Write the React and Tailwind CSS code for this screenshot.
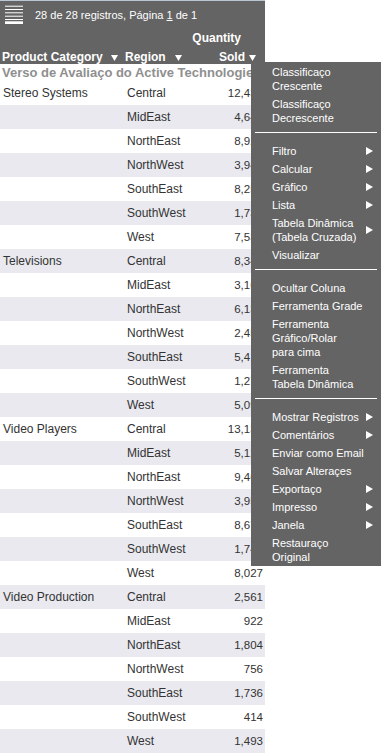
import React from "react";

const data = [
  ["Stereo Systems", [["Central", "12,437"], ["MidEast", "4,649"], ["NorthEast", "8,921"], ["NorthWest", "3,947"], ["SouthEast", "8,257"], ["SouthWest", "1,738"], ["West", "7,534"]]],
  ["Televisions", [["Central", "8,342"], ["MidEast", "3,164"], ["NorthEast", "6,137"], ["NorthWest", "2,456"], ["SouthEast", "5,412"], ["SouthWest", "1,274"], ["West", "5,093"]]],
  ["Video Players", [["Central", "13,135"], ["MidEast", "5,128"], ["NorthEast", "9,463"], ["NorthWest", "3,951"], ["SouthEast", "8,673"], ["SouthWest", "1,745"], ["West", "8,027"]]],
  ["Video Production", [["Central", "2,561"], ["MidEast", "922"], ["NorthEast", "1,804"], ["NorthWest", "756"], ["SouthEast", "1,736"], ["SouthWest", "414"], ["West", "1,493"]]],
];

const menuGroups = [
  [
    { lines: ["Classificaço", "Crescente"] },
    { lines: ["Classificaço", "Decrescente"] },
  ],
  [
    { lines: ["Filtro"], arrow: true },
    { lines: ["Calcular"], arrow: true },
    { lines: ["Gráfico"], arrow: true },
    { lines: ["Lista"], arrow: true },
    { lines: ["Tabela Dinâmica", "(Tabela Cruzada)"], arrow: true },
    { lines: ["Visualizar"] },
  ],
  [
    { lines: ["Ocultar Coluna"] },
    { lines: ["Ferramenta Grade"] },
    { lines: ["Ferramenta", "Gráfico/Rolar", "para cima"] },
    { lines: ["Ferramenta", "Tabela Dinâmica"] },
  ],
  [
    { lines: ["Mostrar Registros"], arrow: true },
    { lines: ["Comentários"], arrow: true },
    { lines: ["Enviar como Email"] },
    { lines: ["Salvar Alteraçes"] },
    { lines: ["Exportaço"], arrow: true },
    { lines: ["Impresso"], arrow: true },
    { lines: ["Janela"], arrow: true },
    { lines: ["Restauraço", "Original"] },
  ],
];

const SortArrow = () => (
  <svg width="7" height="6" viewBox="0 0 7 6" className="mb-[3px] shrink-0">
    <polygon points="0,0 7,0 3.5,6" fill="#ffffff" />
  </svg>
);

const SubArrow = () => (
  <svg width="7" height="8" viewBox="0 0 7 8" className="shrink-0">
    <polygon points="0,0 7,4 0,8" fill="#ffffff" />
  </svg>
);

const App = () => {
  let rowIndex = 0;

  return (
    <div className="relative min-h-[753px] bg-white font-['Liberation_Sans',Arial,sans-serif]">
      <div className="w-[265px]">
        {/* toolbar + column headers */}
        <div className="h-[64px] bg-[#646464] border-t border-[#b9c6d3] text-white overflow-hidden">
          <div className="h-[25px] flex items-start pt-[4px] pl-[5px]">
            <svg width="18" height="19" viewBox="0 0 18 19" className="shrink-0">
              <rect x="0" y="0.7" width="18" height="1" fill="#fff" />
              <rect x="0" y="4" width="18" height="1" fill="#fff" />
              <rect x="0" y="7.3" width="18" height="1" fill="#fff" />
              <rect x="0" y="10.7" width="18" height="1" fill="#fff" />
              <rect x="0" y="14" width="18" height="1" fill="#fff" />
              <rect x="0" y="16.3" width="18" height="2.7" fill="#fff" />
            </svg>
            <div className="ml-[12px] mt-[3px] text-[11px] leading-[14px] whitespace-nowrap">
              28 de 28 registros, Página <span className="underline">1</span> de 1
            </div>
          </div>
          <div className="h-[38px] flex items-end text-[12px] font-bold leading-[14px]">
            <div className="w-[125px] pl-[2px] pr-[7px] flex justify-between items-end">
              <span className="whitespace-nowrap">Product Category</span>
              <SortArrow />
            </div>
            <div className="w-[64px] pr-[7px] flex justify-between items-end">
              <span>Region</span>
              <SortArrow />
            </div>
            <div className="flex-1 pr-[9px] flex flex-col items-end">
              <div className="mr-[15px] mb-[5px]">Quantity</div>
              <div className="flex items-end gap-[4px]">
                <span>Sold</span>
                <SortArrow />
              </div>
            </div>
          </div>
        </div>

        <div className="h-[17px] pl-[2px] text-[13px] font-bold leading-[17px] text-[#8f8f8f] whitespace-nowrap overflow-hidden">
          Verso de Avaliaço do Active Technologies
        </div>

        {data.map(([category, regions]) =>
          regions.map(([region, qty], i) => {
            rowIndex += 1;
            const shaded = rowIndex % 2 === 0;
            return (
              <div
                key={category + region}
                className={
                  "h-[24px] flex items-center text-[12px] leading-[24px] text-[#333333] " +
                  (shaded ? "bg-[#e9e9ef]" : "bg-white")
                }
              >
                <div className="w-[124px] pl-[3px] whitespace-nowrap">
                  {i === 0 ? category : ""}
                </div>
                <div className="w-[80px] pl-[3px]">{region}</div>
                <div className="flex-1 text-right pr-[2px] text-[11.5px]">{qty}</div>
              </div>
            );
          })
        )}
      </div>

      {/* context menu */}
      <div className="absolute left-[251px] top-[62px] w-[130px] bg-[#646464] pt-[1px] text-white text-[11px] leading-[14px]">
        {menuGroups.map((group, g) => (
          <div key={g}>
            {g > 0 && <div className="mx-[4px] mt-[5px] mb-[9px] h-px bg-white" />}
            {group.map((item) => (
              <div
                key={item.lines.join(" ")}
                className="flex items-center justify-between pl-[21px] pr-[8px] py-[2px]"
              >
                <div className="whitespace-nowrap">
                  {item.lines.map((line) => (
                    <div key={line}>{line}</div>
                  ))}
                </div>
                {item.arrow && <SubArrow />}
              </div>
            ))}
          </div>
        ))}
      </div>
    </div>
  );
};

export default App;
